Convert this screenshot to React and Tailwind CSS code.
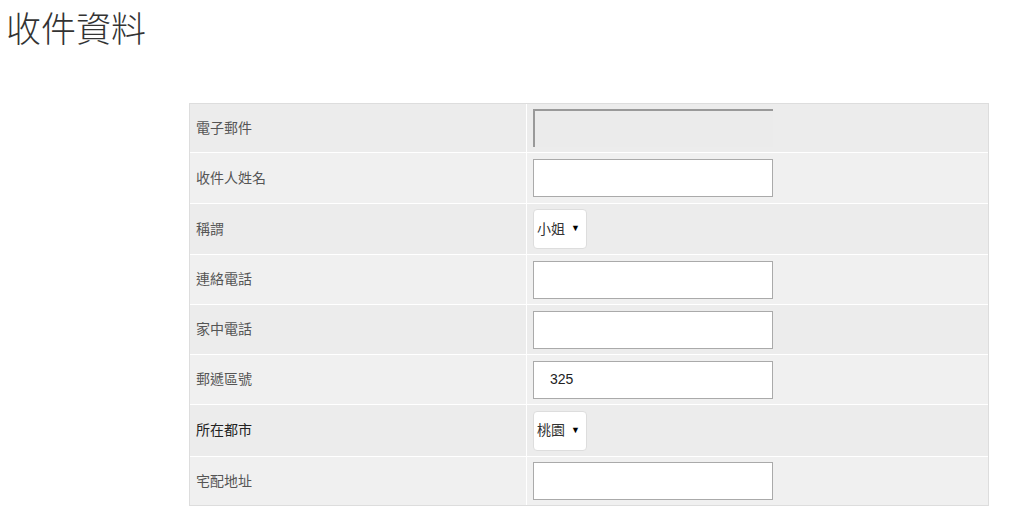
import React from 'react';

const font = { fontFamily: '"Liberation Sans", "Noto Sans CJK TC", sans-serif' };

const rows = [
  { label: '電子郵件', type: 'email', h: 'h-[48px]' },
  { label: '收件人姓名', type: 'text', h: 'h-[51px]' },
  { label: '稱謂', type: 'select', value: '小姐', h: 'h-[51px]' },
  { label: '連絡電話', type: 'text', h: 'h-[50px]' },
  { label: '家中電話', type: 'text', h: 'h-[50px]' },
  { label: '郵遞區號', type: 'text', value: '325', h: 'h-[50px]' },
  { label: '所在都市', type: 'select', value: '桃園', h: 'h-[52px]', dark: true },
  { label: '宅配地址', type: 'text', h: 'h-[49px]' },
];

const Field = ({ row }) => {
  if (row.type === 'email') {
    return <div className="w-[240px] h-[38px] border-t-2 border-l-2 border-[#999999] bg-[#ebebeb]" />;
  }
  if (row.type === 'select') {
    return (
      <div className="w-[54px] h-[40px] bg-white border border-[#dddddd] rounded-[4px] flex items-center pl-[3px] gap-[6px] text-[14px] text-[#333333]">
        <span>{row.value}</span>
        <span className="text-[9px] text-black">▼</span>
      </div>
    );
  }
  return (
    <div className="w-[240px] h-[38px] bg-white border border-[#aaaaaa] flex items-center pl-[16px] text-[14px] text-[#222222]">
      {row.value}
    </div>
  );
};

const App = () => {
  return (
    <div className="w-[1010px] h-[527px] bg-white overflow-hidden" style={font}>
      <h1 className="pl-[6px] pt-[6px] text-[35px] font-light leading-[48px] text-[#333333]">收件資料</h1>

      <div className="ml-[189px] mt-[49px] w-[800px] border border-[#dddddd] flex flex-col">
        {rows.map((row, i) => (
          <div
            key={row.label}
            className={`flex ${row.h} ${i > 0 ? 'border-t border-white' : ''} ${i % 2 === 0 ? 'bg-[#ececec]' : 'bg-[#f0f0f0]'}`}
          >
            <div className={`w-[336px] flex items-center pl-[6px] text-[14px] ${row.dark ? 'text-[#222222]' : 'text-[#555555]'}`}>
              {row.label}
            </div>
            <div className="flex-1 border-l border-white flex items-center pl-[6px]">
              <Field row={row} />
            </div>
          </div>
        ))}
      </div>
    </div>
  );
};

export default App;
